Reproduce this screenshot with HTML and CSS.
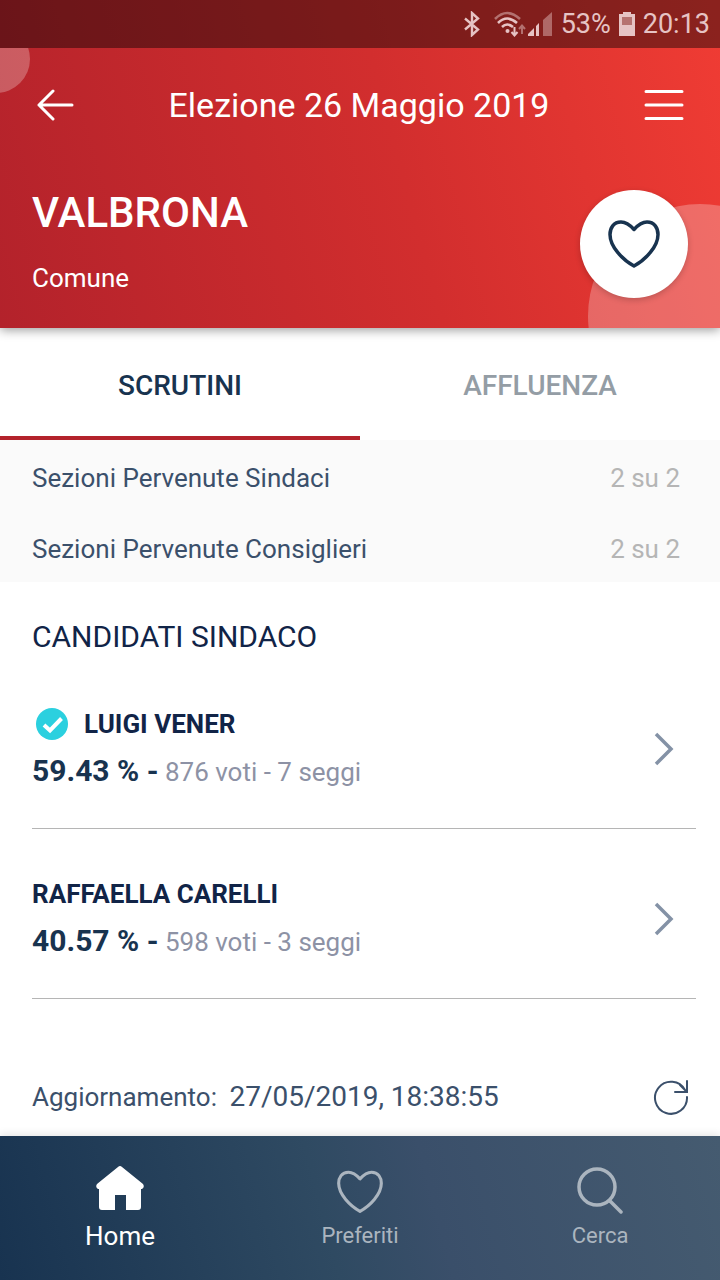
FILE: index.html
```
<!DOCTYPE html>
<html lang="it">
<head>
  <meta charset="UTF-8" />
  <meta name="viewport" content="width=device-width, initial-scale=1.0"/>
  <title>Elezione 26 Maggio 2019</title>
  <link rel="stylesheet" href="styles.css">
</head>
<body>
  <header class="hero">
    <div class="status-bar">
      <svg class="status-bluetooth" width="18" height="26" viewBox="0 0 18 26" fill="none" stroke="currentColor" stroke-width="2.4"><path d="M2 7.5l13 11L9 24V2l6 5.5-13 11"/></svg>
      <svg class="status-wifi" width="34" height="26" viewBox="0 0 34 26" fill="none" stroke="currentColor" stroke-width="2.6">
        <path d="M2 8Q14 -4 27 8" opacity=".5"/>
        <path d="M5 12Q14 3 24 12M9 16Q14 11 20 16"/>
        <circle cx="14.500" cy="20" r="2" fill="currentColor" stroke="none"/>
        <path d="M21.500 16v8M18.500 21l3 3.500 3-3.500" stroke-width="2"/>
        <path d="M29 23v-8M26 18l3-3.500 3 3.500" stroke-width="2" opacity=".5"/>
      </svg>
      <svg class="status-signal" width="26" height="26" viewBox="0 0 26 26" fill="currentColor"><path d="M1 25v-2l6-6v8zM9 25V15l3-3v13z"/><path d="M16 25V9l9-8v24z" opacity=".45"/></svg>
      <span>53%</span>
      <svg class="status-battery" width="16" height="26" viewBox="0 0 16 26" fill="currentColor"><path d="M4 1h8v2h4v22H0V3h4z" opacity=".5"/><path d="M4 1h8v2h4v22H0V3h4zM3 6v8h10V6z" fill-rule="evenodd"/></svg>
      <span>20:13</span>
    </div>

    <div class="hero-content">
      <div class="top-bar">
        <button class="icon-button" aria-label="Indietro">
          <svg width="38" height="32" viewBox="0 0 38 32" fill="none" stroke="currentColor" stroke-width="3" stroke-linecap="round" stroke-linejoin="round"><path d="M36 16H3M17 2L3 16l14 14"/></svg>
        </button>
        <h1>Elezione 26 Maggio 2019</h1>
        <button class="icon-button" aria-label="Menu">
          <svg width="40" height="32" viewBox="0 0 40 32" fill="none" stroke="currentColor" stroke-width="3" stroke-linecap="round"><path d="M2 2.500h36M2 16h36M2 29.500h36"/></svg>
        </button>
      </div>

      <div class="place">
        <div>
          <h2>VALBRONA</h2>
          <p>Comune</p>
        </div>
        <button class="favorite-button" aria-label="Aggiungi ai preferiti">
          <svg width="54" height="50" viewBox="0 0 54 50" fill="none" stroke="currentColor" stroke-width="3.500"><path d="M27 10.500C23 6 19 3 14 3 6.500 3 3 9 3 15.500 3 28 16 41 27 47 38 41 51 28 51 15.500 51 9 47.500 3 40 3 35 3 31 6 27 10.500z" stroke-linejoin="round"/></svg>
        </button>
      </div>
    </div>
  </header>

  <div class="tabs" role="tablist">
    <button class="tab active" role="tab" aria-selected="true">SCRUTINI</button>
    <button class="tab" role="tab" aria-selected="false">AFFLUENZA</button>
  </div>

  <main>
    <dl class="sections">
      <div><dt>Sezioni Pervenute Sindaci</dt><dd>2 su 2</dd></div>
      <div><dt>Sezioni Pervenute Consiglieri</dt><dd>2 su 2</dd></div>
    </dl>

    <h3>CANDIDATI SINDACO</h3>

    <a class="candidate" href="#">
      <div>
        <div class="candidate-name">
          <svg width="32" height="32" viewBox="0 0 32 32"><circle cx="16" cy="16" r="16" fill="#2bd0df"/><path d="M8 17l6 5.500L25.500 10.500" fill="none" stroke="#fff" stroke-width="4"/></svg>
          LUIGI VENER
        </div>
        <div class="result"><strong>59.43 % -</strong> <span>876 voti - 7 seggi</span></div>
      </div>
      <svg class="chevron" width="20" height="34" viewBox="0 0 20 34"><path d="M2 2l15 15L2 32"/></svg>
    </a>

    <a class="candidate" href="#">
      <div>
        <div class="candidate-name">RAFFAELLA CARELLI</div>
        <div class="result"><strong>40.57 % -</strong> <span>598 voti - 3 seggi</span></div>
      </div>
      <svg class="chevron" width="20" height="34" viewBox="0 0 20 34"><path d="M2 2l15 15L2 32"/></svg>
    </a>

    <div class="update">
      <p>Aggiornamento: <time>27/05/2019, 18:38:55</time></p>
      <button class="icon-button" aria-label="Aggiorna">
        <svg width="36" height="36" viewBox="0 0 36 36" fill="none" stroke="currentColor" stroke-width="2"><path d="M34 18A16 16 0 1 1 32 11M34 2v11H22M27 6l7 7" stroke-linecap="round"/></svg>
      </button>
    </div>
  </main>

  <nav class="bottom-nav">
    <a class="active" href="#">
      <svg width="48" height="48" viewBox="0 0 48 48" fill="currentColor"><path d="M22 1q2-2 4 0l21 17q2 3-1 5h-1v18q0 3-3 3H30V29H19v15H6q-3 0-3-3V23H2q-3-2-1-5z"/></svg>
      Home
    </a>
    <a href="#">
      <svg width="48" height="48" viewBox="0 0 54 54" fill="none" stroke="currentColor" stroke-width="3.500"><path d="M27 14.500C23 10 19 7 14 7 6.500 7 3 13 3 19.500 3 32 16 45 27 51 38 45 51 32 51 19.500 51 13 47.500 7 40 7 35 7 31 10 27 14.500z" stroke-linejoin="round"/></svg>
      Preferiti
    </a>
    <a href="#">
      <svg width="48" height="48" viewBox="0 0 48 48" fill="none" stroke="currentColor" stroke-width="3.500" stroke-linecap="round"><circle cx="21" cy="21" r="18"/><path d="M34 35l11 11"/></svg>
      Cerca
    </a>
  </nav>
</body>
</html>
```
FILE: styles.css
```
* {
  box-sizing: border-box;
}

body {
  margin: 0;
  min-height: 100vh;
  display: flex;
  flex-direction: column;
  font-family: Roboto, "Open Sans", sans-serif;
  font-size: 26px;
  color: #3b506b;
  background-color: #fff;
}

h1, h2, h3, p, dl, dd {
  margin: 0;
  font-weight: 400;
}

button {
  border: none;
  padding: 0;
  background: none;
  color: inherit;
  font: inherit;
  cursor: pointer;
}

svg {
  display: block;
  flex-shrink: 0;
}

a {
  text-decoration: none;
}

.hero {
  position: relative;
  z-index: 1;
  color: #fff;
  background: linear-gradient(75deg, #b3222b, #d22e2e 55%, #f03c34);
  box-shadow: 0 2px 10px rgba(0,0,0,0.4);
}

.status-bar {
  display: flex;
  align-items: center;
  justify-content: flex-end;
  height: 48px;
  padding-right: 10px;
  background-color: rgba(0,0,0,0.42);
  color: #e6c3c4;
  font-size: 27px;
}

.status-bluetooth {
  margin-right: 12px;
}

.status-signal {
  margin-right: 8px;
}

.status-battery {
  margin: 0 8px;
}

.hero-content {
  position: relative;
  overflow: hidden;
  height: 280px;
}

/* pale circles in the corners of the header */
.hero-content::before,
.hero-content::after {
  content: "";
  position: absolute;
  border-radius: 50%;
  background-color: rgba(255,255,255,0.26);
}

.hero-content::before {
  width: 68px;
  height: 68px;
  left: -38px;
  top: -23px;
}

.hero-content::after {
  width: 224px;
  height: 224px;
  right: -92px;
  top: 156px;
}

.top-bar {
  display: flex;
  align-items: center;
  justify-content: space-between;
  height: 114px;
  padding: 0 36px;
}

h1 {
  font-size: 34px;
}

.place {
  position: relative;
  z-index: 1;
  display: flex;
  justify-content: space-between;
  padding: 22px 32px 0;
}

h2 {
  font-size: 42px;
  font-weight: 500;
  line-height: 58px;
}

.place p {
  margin-top: 18px;
  line-height: 36px;
}

.favorite-button {
  display: flex;
  align-items: center;
  justify-content: center;
  width: 108px;
  height: 108px;
  margin-top: 6px;
  border-radius: 50%;
  background-color: #fff;
  color: #18334f;
  box-shadow: 0 2px 6px rgba(0,0,0,0.2);
}

.tabs {
  display: flex;
  height: 112px;
}

.tab {
  flex: 1;
  padding-top: 6px;
  border-bottom: 4px solid transparent;
  color: #949da5;
  font-size: 28px;
  font-weight: 500;
}

.tab.active {
  border-color: #b3222b;
  color: #18334f;
}

.sections {
  background-color: #fafafa;
}

.sections div {
  display: flex;
  align-items: center;
  justify-content: space-between;
  height: 71px;
  padding: 4px 40px 0 32px;
}

.sections dd {
  color: #b5b5b5;
}

h3 {
  padding: 33px 32px 0;
  font-size: 30px;
  line-height: 44px;
  color: #112447;
}

.candidate {
  display: flex;
  align-items: center;
  justify-content: space-between;
  margin: 0 24px 0 32px;
  padding: 42px 22px 32px 0;
  border-bottom: 1px solid #b5b5b5;
}

.candidate-name {
  display: flex;
  align-items: center;
  gap: 16px;
  line-height: 46px;
  font-weight: 700;
  color: #112447;
}

.candidate-name svg {
  margin-left: 4px;
}

.result {
  line-height: 48px;
  color: #8d92a5;
}

.result strong {
  font-size: 30px;
  color: #18334f;
}

.chevron {
  fill: none;
  stroke: #8492a6;
  stroke-width: 3.5;
}

.update {
  display: flex;
  align-items: center;
  justify-content: space-between;
  padding: 78px 31px 19px 32px;
  line-height: 40px;
}

.update time {
  margin-left: 6px;
  font-size: 28px;
}

.bottom-nav {
  display: flex;
  flex-shrink: 0;
  height: 144px;
  margin-top: auto;
  background: linear-gradient(75deg, #183350, #2f4a62 45%, #3a4f6a 60%, #455b70);
  box-shadow: 0 -2px 8px rgba(0,0,0,0.1);
}

.bottom-nav a {
  flex: 1;
  display: flex;
  flex-direction: column;
  align-items: center;
  padding-top: 30px;
  font-size: 22px;
  line-height: 44px;
  color: #abb5bf;
}

.bottom-nav .active {
  font-size: 26px;
  color: #fff;
}
```
